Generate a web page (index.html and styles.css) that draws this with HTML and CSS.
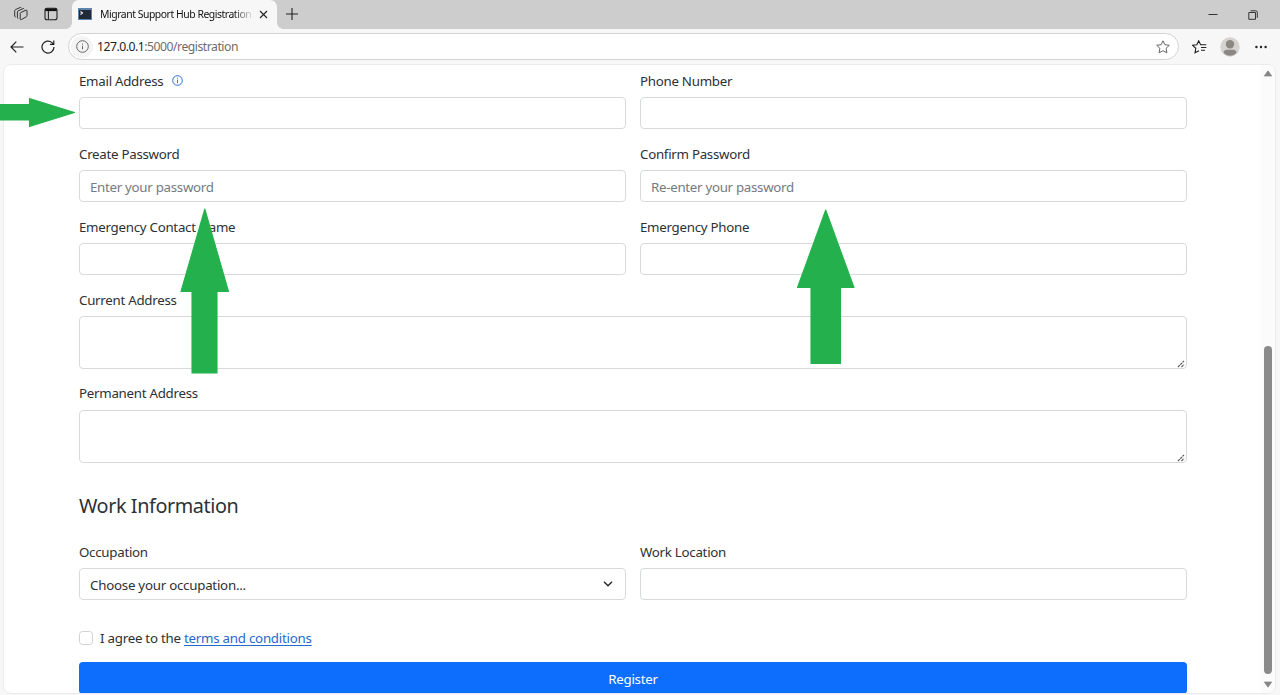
FILE: index.html
```html
<!DOCTYPE html>
<html lang="en">
<head>
<meta charset="utf-8">
<title>Migrant Support Hub Registration</title>
<link rel="stylesheet" href="styles.css">
</head>
<body>
<div class="window">
  <header class="tabbar">
    <svg class="workspaces" width="16" height="16" viewBox="0 0 16 16"><path d="M7.600 6.600 13 4.200Q14 3.900 14 4.900V9.700Q14 10.400 13.300 10.800L8.300 13.600Q7.300 14 7.200 13V7.400Q7.200 6.800 7.600 6.600ZM5.300 12.500Q4.400 12.300 4.400 11.400V6Q4.400 5.300 5 5L10 2.700Q10.900 2.400 11.200 3.200M2.600 11Q1.700 10.800 1.700 10V4.700Q1.700 4 2.300 3.700L7.200 1.500Q8 1.200 8.400 1.900"/></svg>
    <svg class="tabactions" width="14" height="14" viewBox="0 0 14 14"><rect x="1" y="1.2" width="12" height="11.6" rx="2"/><path d="M4.4 4V12.500"/><path d="M1.300 2.800H12.700" class="thick"/></svg>
    <div class="tab">
      <svg class="favicon" width="14" height="12" viewBox="0 0 14 12"><rect width="14" height="12" fill="#5d84ae"/><rect x="1" y="2" width="12" height="9" fill="#202a38"/><path d="M2.5 3.5 4.5 5 2.5 6.5" fill="none" stroke="#fff"/></svg>
      <span class="tab-title">Migrant Support Hub Registration</span>
      <svg class="close" width="9" height="9" viewBox="0 0 9 9"><path d="M1 1 8 8M8 1 1 8"/></svg>
    </div>
    <svg class="newtab" width="12" height="12" viewBox="0 0 12 12"><path d="M6 0V12M0 6H12"/></svg>
    <div class="controls">
      <svg width="10" height="10" viewBox="0 0 10 10"><path d="M.5 4.5H9.5"/></svg>
      <svg width="10" height="10" viewBox="0 0 10 10"><path d="M.8 2.5H7.5V9.3H.8ZM2.5.8H7.7Q9.3.8 9.3 2.4V7.8"/></svg>
    </div>
  </header>
  <nav class="toolbar">
    <svg class="back" width="14" height="12" viewBox="0 0 14 12"><path d="M13.5 6H1M6.3.7 1 6 6.3 11.3"/></svg>
    <svg class="reload" width="14" height="14" viewBox="0 0 14 14"><path d="M13 7A6 6 0 1 1 11 2.6L12.7 4.2M12.8.5V4.4H8.9"/></svg>
    <div class="address">
      <span class="site-info"><svg width="13" height="13" viewBox="0 0 13 13"><circle cx="6.5" cy="6.5" r="5.8"/><path d="M6.5 5.8V9.3M6.5 3.6V4.7"/></svg></span>
      <span class="url"><b>127.0.0.1</b>:5000/registration</span>
      <svg class="star" width="14" height="14" viewBox="0 0 14 14"><path d="M7 .8 8.9 4.7 13.3 5.3 10.1 8.3 10.9 12.8 7 10.7 3.1 12.8 3.9 8.3.7 5.3 5.1 4.7Z"/></svg>
    </div>
    <svg class="favorites" width="15" height="14" viewBox="0 0 15 14"><path d="M9 4.7H8.6L6.7.8 4.8 4.7.6 5.3 3.8 8.3 3 12.8 7 10.7M9 4.7H14.3M9 7.5H14.3M9 10.2H13"/></svg>
    <svg class="profile" width="20" height="20" viewBox="0 0 20 20"><circle cx="10" cy="10" r="9.7" fill="#d5d2cf"/><circle cx="10" cy="7.3" r="4.2" fill="#8b8783"/><path d="M3.5 15.5Q4 12.8 7 12.8H13Q16 12.8 16.5 15.5Q14 18.8 10 18.8Q6 18.8 3.5 15.5" fill="#8b8783"/></svg>
    <svg class="more" width="12" height="4" viewBox="0 0 12 4"><circle cx="1.4" cy="2" r="1.2"/><circle cx="6" cy="2" r="1.2"/><circle cx="10.6" cy="2" r="1.2"/></svg>
  </nav>
  <div class="page">
    <form class="form">
      <div class="grid">
        <div class="field"><label>Email Address <svg class="hint" width="11" height="11" viewBox="0 0 11 11"><circle cx="5.5" cy="5.5" r="4.8"/><path d="M5.5 4.7V8.2M5.5 2.7V3.7"/></svg></label><input class="control" type="text"></div>
        <div class="field"><label>Phone Number</label><input class="control" type="text"></div>
        <div class="field"><label>Create Password</label><input class="control" type="text" placeholder="Enter your password"></div>
        <div class="field"><label>Confirm Password</label><input class="control" type="text" placeholder="Re-enter your password"></div>
        <div class="field"><label>Emergency Contact Name</label><input class="control" type="text"></div>
        <div class="field"><label>Emergency Phone</label><input class="control" type="text"></div>
        <div class="field wide"><label>Current Address</label><div class="control area"><svg class="grip" width="8" height="8" viewBox="0 0 8 8"><path d="M1 7 7 1M4.500 7 7 4.500"/></svg></div></div>
        <div class="field wide"><label class="raised">Permanent Address</label><div class="control area"><svg class="grip" width="8" height="8" viewBox="0 0 8 8"><path d="M1 7 7 1M4.500 7 7 4.500"/></svg></div></div>
      </div>
      <h2 class="heading">Work Information</h2>
      <div class="grid">
        <div class="field"><label>Occupation</label><div class="control select"><span>Choose your occupation...</span><svg width="10" height="6" viewBox="0 0 10 6"><path d="M1 .8 5 4.8 9 .8"/></svg></div></div>
        <div class="field"><label>Work Location</label><input class="control" type="text"></div>
      </div>
      <div class="agree"><span class="box"></span><span class="agree-text">I agree to the <a class="terms" href="#">terms and conditions</a></span></div>
      <button class="register" type="button">Register</button>
    </form>
    <div class="scrollbar">
      <svg width="10" height="7" viewBox="0 0 10 7"><path d="M5 .8 8.7 6H1.3Z"/></svg>
      <span class="thumb"></span>
      <svg width="10" height="7" viewBox="0 0 10 7"><path d="M5 6.2 8.7 1H1.3Z"/></svg>
    </div>
  </div>
  <svg class="arrows" width="1280" height="695" viewBox="0 0 1280 695"><path d="M0 104.500H29.500V98.500L74.500 112.500 29.500 126.500V120H0ZM204.800 209 228.500 291.500H217V373H192V291.500H181ZM825.700 210 854 287.500H840.500V363.500H811V287.500H797.500Z"/></svg>
</div>
</body>
</html>
```
FILE: styles.css
```css
* { box-sizing: border-box; }
body { margin: 0; overflow: hidden; font-family: "Noto Sans", "Open Sans", sans-serif; color: #2c3135; }
.window { position: relative; width: 1280px; height: 695px; background: #f7f7f7; display: flex; flex-direction: column; }
svg { flex: none; fill: none; stroke: #222; stroke-width: 1.1; }
.tabbar { height: 29px; background: #cdcdcd; display: flex; align-items: center; }
.workspaces { margin: 0 0 1px 13px; stroke: #333; stroke-width: 1; }
.tabactions { margin: 0 0 1px 15px; }
.tabactions .thick { stroke-width: 2.6; stroke: #111; }
.tab { position: relative; align-self: stretch; width: 205px; margin-left: 14px; padding: 0 9px 1px 6px; display: flex; align-items: center; background: #f7f7f7; border-radius: 7px 7px 0 0; }
.tab::before, .tab::after { content: ""; position: absolute; bottom: 0; width: 6px; height: 6px; }
.tab::before { left: -6px; background: radial-gradient(circle at 0 0, #cdcdcd 5.5px, #f7f7f7 6px); }
.tab::after { right: -6px; background: radial-gradient(circle at 100% 0, #cdcdcd 5.5px, #f7f7f7 6px); }
.favicon, .profile { stroke: none; }
.tab-title { width: 152px; margin-left: 8px; padding-bottom: 1px; overflow: hidden; white-space: nowrap; font-size: 10.4px; letter-spacing: -.45px; color: #111; -webkit-mask-image: linear-gradient(90deg, #000 88%, rgba(0,0,0,.1)); mask-image: linear-gradient(90deg, #000 88%, rgba(0,0,0,.1)); }
.close { margin-left: 7px; }
.newtab { margin: 0 0 2px 9px; }
.controls { margin: 0 22px 0 auto; display: flex; gap: 30px; }
.controls svg { stroke-width: .9; }
.toolbar { height: 35px; flex: none; display: flex; align-items: center; }
.back { margin-left: 10px; stroke-width: 1.2; }
.reload { margin-left: 17px; stroke-width: 1.2; }
.address { width: 1111px; height: 27px; margin-left: 13px; padding: 0 8px 0 2px; display: flex; align-items: center; background: #fff; border: 1px solid #d2d2d2; border-radius: 14px; }
.site-info { width: 22px; height: 22px; border-radius: 50%; background: #f4f4f4; display: flex; align-items: center; justify-content: center; }
.site-info svg { stroke: #666; stroke-width: 1; }
.url { margin-left: 4px; font-size: 12.2px; letter-spacing: -.48px; color: #6d6d6d; }
.url b { font-weight: 400; color: #222; }
.star { margin-left: auto; stroke: #666; stroke-width: 1; }
.favorites { margin-left: 13px; }
.profile { margin-left: 13px; }
.more { margin-left: 15px; fill: #222; stroke: none; }
.page { position: relative; width: 1273px; height: 630px; margin-left: 3px; display: flex; justify-content: space-between; background: #fff; border: 1px solid #ebebeb; border-radius: 8px; overflow: hidden; }
.form { width: 1108px; margin-left: 75px; padding-top: 5px; }
.grid { display: grid; grid-template-columns: 547px 547px; column-gap: 14px; row-gap: 14px; }
.wide { grid-column: 1 / -1; }
.field label { display: flex; align-items: center; height: 21px; margin-bottom: 6px; font-size: 13.3px; letter-spacing: -.27px; white-space: nowrap; }
.field .raised { padding-bottom: 1px; }
.hint { margin-left: 9px; stroke: #2f6fd0; stroke-width: 1; }
.control { display: block; width: 100%; height: 32px; padding: 1px 10px 0; background: #fff; border: 1px solid #d6dadd; border-radius: 4px; font: 13.3px "Noto Sans", "Open Sans", sans-serif; letter-spacing: -.29px; color: #2c3135; }
.control::placeholder { color: #747b81; opacity: 1; }
.area { height: 53px; padding: 0 1px 0 0; display: flex; justify-content: flex-end; align-items: flex-end; }
.grip { stroke: #555; stroke-width: 1.1; stroke-dasharray: 2.6 .6; }
.heading { height: 28px; margin: 29px 0 21px; font-size: 19.8px; line-height: 28px; font-weight: 400; letter-spacing: -.4px; }
.select { display: flex; align-items: center; justify-content: space-between; padding: 2px 12px 0 10px; letter-spacing: -.24px; }
.select svg { margin-bottom: 2px; stroke-width: 1.3; }
.agree { height: 20px; margin-top: 28px; display: flex; align-items: center; font-size: 13.3px; letter-spacing: -.24px; white-space: nowrap; }
.box { width: 14px; height: 14px; margin-right: 7px; border: 1px solid #ced2d6; border-radius: 3.5px; }
.terms { color: #2469cc; text-decoration: underline; text-underline-offset: 2px; }
.register { display: block; width: 100%; height: 32px; margin-top: 14px; padding: 1px 0 0; border: 0; border-radius: 4px; background: #0d6efd; color: #fff; font: 13.3px "Noto Sans", "Open Sans", sans-serif; letter-spacing: -.27px; }
.scrollbar { width: 14px; padding: 5px 0 5px; background: #fbfbfb; display: flex; flex-direction: column; align-items: center; }
.scrollbar svg { fill: #858585; stroke: #858585; stroke-width: .7; }
.thumb { width: 8px; height: 328px; margin: auto 0 7px; border-radius: 4px; background: #8a8a8a; }
.arrows { position: absolute; left: 0; top: 0; fill: #24b14d; stroke: #24b14d; stroke-linejoin: round; pointer-events: none; }
```
